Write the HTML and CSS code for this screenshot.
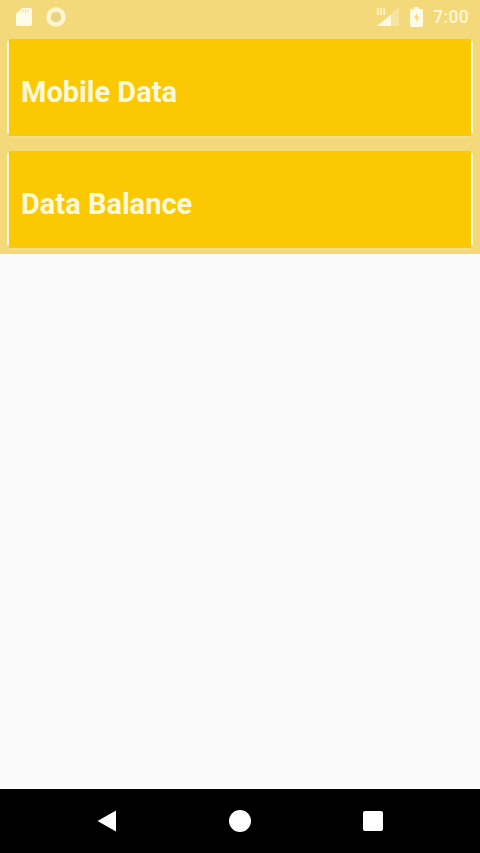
FILE: index.html
```html
<!DOCTYPE html>
<html lang="en">
<head>
<meta charset="utf-8">
<title>Data</title>
<link rel="stylesheet" href="styles.css">
</head>
<body>
<div class="screen">
  <header class="status">
    <div class="status-left">
      <svg class="ic-sd" viewBox="0 0 16 18"><path d="M6 0h8a2 2 0 0 1 2 2v14a2 2 0 0 1-2 2H2a2 2 0 0 1-2-2V6z" fill="#fffbe6"/><path d="M7 1.500v3M9.500 1.500v3M12 1.500v3" stroke="#f3d97a" stroke-width="1"/></svg>
      <svg class="ic-ring" viewBox="0 0 20 20"><circle cx="10" cy="10" r="7.500" fill="#e9d484" stroke="#fdf6d0" stroke-width="4.500"/></svg>
    </div>
    <div class="status-right">
      <svg class="ic-signal" viewBox="0 0 24 20"><path d="M1 1h1.700v7H1zM4.200 1h1.700v7H4.200zM7.400 1h1.700v7H7.400z" fill="#fff6cf"/><path d="M1 19 23 1v18z" fill="#fffbe6"/><path d="M15 7.500 23 1v18h-8z" fill="#f6e49c"/></svg>
      <svg class="ic-batt" viewBox="0 0 13 20"><path d="M4 0h5v2h2a2 2 0 0 1 2 2v14a2 2 0 0 1-2 2H2a2 2 0 0 1-2-2V4a2 2 0 0 1 2-2h2z" fill="#fffbe6"/><path d="M7.500 5 4 11.500h2.500V16L9.500 9.500H7z" fill="#f3d97a"/></svg>
      <span class="time">7:00</span>
    </div>
  </header>
  <section class="menu">
    <div class="row">
      <i class="edge"></i>
      <div class="card">Mobile Data</div>
      <i class="edge"></i>
    </div>
    <div class="row">
      <i class="edge"></i>
      <div class="card">Data Balance</div>
      <i class="edge"></i>
    </div>
  </section>
  <main class="blank"></main>
  <nav class="nav">
    <svg class="ic-back" viewBox="0 0 20 22"><path d="M19 .500v21L.500 11z" fill="#fff"/></svg>
    <span class="home"></span>
    <span class="recent"></span>
  </nav>
</div>
</body>
</html>
```

FILE: styles.css
```css
* { box-sizing: border-box; }
html, body { margin: 0; padding: 0; }
body { font-family: Roboto, "Liberation Sans", sans-serif; background: #fafafa; }
.screen { width: 480px; height: 853px; display: flex; flex-direction: column; overflow: hidden; }

.status { height: 38px; background: #f3d97a; display: flex; align-items: center; justify-content: space-between; padding: 0 11px 5px 16px; flex: none; }
.status-left, .status-right { display: flex; align-items: center; }
.ic-sd { width: 16px; height: 18px; }
.ic-ring { width: 20px; height: 20px; margin-left: 14px; }
.ic-signal { width: 24px; height: 20px; }
.ic-batt { width: 13px; height: 20px; margin-left: 10px; }
.time { margin-left: 10px; font-size: 17.500px; font-weight: 500; letter-spacing: .3px; color: #fff8d8; }

.menu { flex: none; background: #f3d97a; height: 216px; padding: 1px 7px 0; display: flex; flex-direction: column; gap: 15px; }
.row { display: flex; height: 97px; align-items: stretch; }
.edge { width: 2px; flex: none; background: #fff9dc; margin: 2px 0 3px; }
.card { flex: 1; background: #fbc903; color: #fff9dc; font-size: 29px; font-weight: 700; display: flex; align-items: center; padding: 8px 0 0 12px; box-shadow: 0 3px 2px -1px #f7df8a; }

.blank { flex: 1; background: #fafafa; }

.nav { height: 64px; flex: none; background: #000; display: flex; align-items: center; justify-content: space-between; padding: 0 97px; }
.ic-back { width: 20px; height: 22px; }
.home { width: 22px; height: 22px; border-radius: 50%; background: #fff; }
.recent { width: 20px; height: 20px; border-radius: 2px; background: #fff; }
```
